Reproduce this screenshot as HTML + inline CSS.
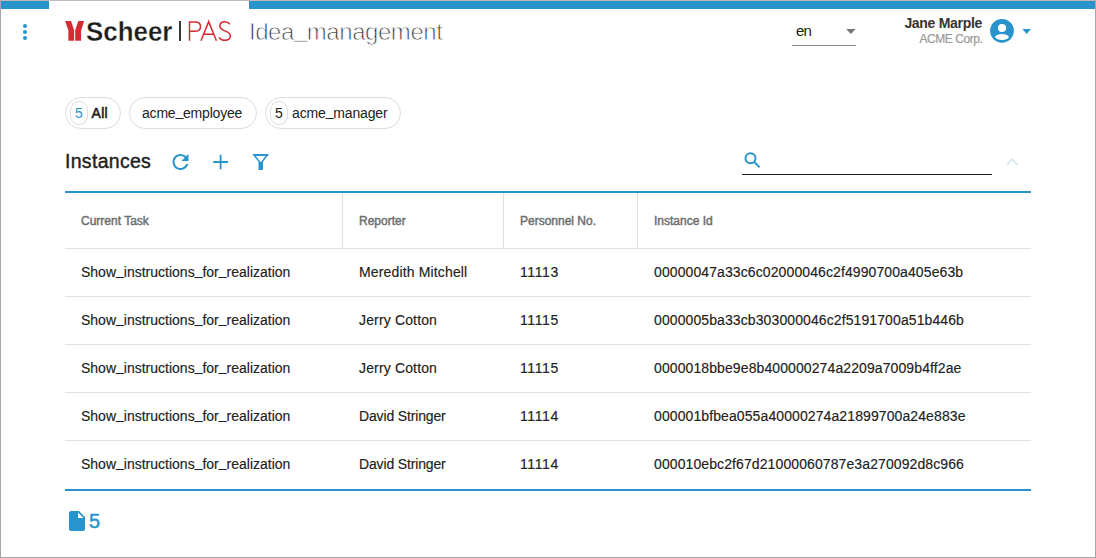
<!DOCTYPE html>
<html><head><meta charset="utf-8">
<style>
*{box-sizing:border-box;margin:0;padding:0}
html,body{width:1096px;height:558px;overflow:hidden;background:#fff}
body{font-family:"Liberation Sans",sans-serif;color:#212121;position:relative}
.a{position:absolute;white-space:nowrap}
.frame{position:absolute;left:0;top:0;width:1096px;height:558px;border:1px solid #aaa6a9;border-top-color:#c4b9b9;pointer-events:none}
.bar{position:absolute;top:1px;height:8px;background:#2994cc}
.dot{position:absolute;left:23px;width:4px;height:4px;border-radius:50%;background:#2994cc}
.chip{position:absolute;top:97px;height:32px;border:1px solid #dcdcdc;border-radius:16px}
.badge{position:absolute;top:3px;height:24px;border:1px solid #dcdcdc;border-radius:12px}
.hline{position:absolute;left:65px;width:966px;height:1px;background:#e0e0e0}
.vline{position:absolute;top:193px;width:1px;height:55px;background:#e0e0e0}
.th{position:absolute;top:214px;font-size:12px;color:#6e6e6e;-webkit-text-stroke:0.45px #6e6e6e}
.td{position:absolute;font-size:14px;color:#212121;-webkit-text-stroke:0.15px #212121}
.us{position:relative;top:-2px}
</style></head><body>
<div class="bar" style="left:1px;width:48px"></div>
<div class="bar" style="left:249px;width:846px"></div>
<div class="dot" style="top:24px"></div>
<div class="dot" style="top:30px"></div>
<div class="dot" style="top:36px"></div>

<!-- logo -->
<div class="a" style="left:86px;top:16px;font-size:28px;font-weight:bold;color:#1d1d1b;transform:scaleX(0.925);transform-origin:0 0;-webkit-text-stroke:0.3px #fff">Scheer</div>
<div class="a" style="left:179px;top:21px;width:2px;height:20px;background:#3a3a3a"></div>

<div class="a" style="left:249px;top:18px;font-size:24px;letter-spacing:-0.45px;color:#3a3a3a;-webkit-text-stroke:0.8px #fff">Idea<span style="position:relative;top:-3px">_</span>management</div>

<!-- lang -->
<div class="a" style="left:796px;top:22px;font-size:15px;letter-spacing:-0.8px;color:#212121">en</div>
<div class="a" style="left:792px;top:45px;width:64px;height:1px;background:#8a8a8a"></div>

<!-- user -->
<div class="a" style="left:880px;top:15px;width:102px;text-align:right;font-size:14px;letter-spacing:-0.3px;font-weight:bold;color:#333">Jane Marple</div>
<div class="a" style="left:880px;top:32px;width:102.4px;text-align:right;font-size:12px;letter-spacing:-0.45px;color:#999;-webkit-text-stroke:0.2px #999">ACME Corp.</div>

<!-- chips -->
<div class="chip" style="left:65px;width:56px"><div class="badge" style="left:4px;width:18px"></div></div>
<div class="chip" style="left:129px;width:128px"></div>
<div class="chip" style="left:265px;width:136px"><div class="badge" style="left:4px;width:18px"></div></div>

<div class="a" style="left:65px;top:150px;font-size:19.5px;letter-spacing:0.3px;color:#212121;-webkit-text-stroke:0.4px #212121">Instances</div>

<div class="a" style="left:65px;top:191px;width:966px;height:2px;background:#2994cc"></div>
<div class="a" style="left:742px;top:174px;width:250px;height:1px;background:#222"></div>

<div class="vline" style="left:342px"></div>
<div class="vline" style="left:503px"></div>
<div class="vline" style="left:637px"></div>
<div class="hline" style="top:248px"></div>
<div class="hline" style="top:296px"></div>
<div class="hline" style="top:344px"></div>
<div class="hline" style="top:392px"></div>
<div class="hline" style="top:440px"></div>
<div class="a" style="left:65px;top:489px;width:966px;height:2px;background:#2994cc"></div>

<div class="th" style="left:81px">Current Task</div>
<div class="th" style="left:359px">Reporter</div>
<div class="th" style="left:520px">Personnel No.</div>
<div class="th" style="left:654px">Instance Id</div>

<div class="td" style="left:81px;top:264px">Show<span class="us">_</span>instructions<span class="us">_</span>for<span class="us">_</span>realization</div>
<div class="td" style="letter-spacing:0.15px;left:359px;top:264px">Meredith Mitchell</div>
<div class="td" style="letter-spacing:0.6px;left:520px;top:264px">11113</div>
<div class="td" style="letter-spacing:0.1px;left:654px;top:264px">00000047a33c6c02000046c2f4990700a405e63b</div>
<div class="td" style="left:81px;top:312px">Show<span class="us">_</span>instructions<span class="us">_</span>for<span class="us">_</span>realization</div>
<div class="td" style="letter-spacing:0.15px;left:359px;top:312px">Jerry Cotton</div>
<div class="td" style="letter-spacing:0.6px;left:520px;top:312px">11115</div>
<div class="td" style="letter-spacing:0.1px;left:654px;top:312px">0000005ba33cb303000046c2f5191700a51b446b</div>
<div class="td" style="left:81px;top:360px">Show<span class="us">_</span>instructions<span class="us">_</span>for<span class="us">_</span>realization</div>
<div class="td" style="letter-spacing:0.15px;left:359px;top:360px">Jerry Cotton</div>
<div class="td" style="letter-spacing:0.6px;left:520px;top:360px">11115</div>
<div class="td" style="letter-spacing:0.1px;left:654px;top:360px">0000018bbe9e8b400000274a2209a7009b4ff2ae</div>
<div class="td" style="left:81px;top:408px">Show<span class="us">_</span>instructions<span class="us">_</span>for<span class="us">_</span>realization</div>
<div class="td" style="letter-spacing:-0.15px;left:359px;top:408px">David Stringer</div>
<div class="td" style="letter-spacing:0.6px;left:520px;top:408px">11114</div>
<div class="td" style="letter-spacing:0.1px;left:654px;top:408px">000001bfbea055a40000274a21899700a24e883e</div>
<div class="td" style="left:81px;top:456px">Show<span class="us">_</span>instructions<span class="us">_</span>for<span class="us">_</span>realization</div>
<div class="td" style="letter-spacing:-0.15px;left:359px;top:456px">David Stringer</div>
<div class="td" style="letter-spacing:0.6px;left:520px;top:456px">11114</div>
<div class="td" style="letter-spacing:0.1px;left:654px;top:456px">000010ebc2f67d21000060787e3a270092d8c966</div>


<!-- icons header -->
<svg class="a" style="left:0;top:0" width="1096" height="558" viewBox="0 0 1096 558">
  <!-- avatar -->
  <circle cx="1002" cy="30.8" r="11.9" fill="#2994cc"/>
  <circle cx="1002" cy="28" r="4.1" fill="#fff"/>
  <ellipse cx="1002" cy="37" rx="6.9" ry="2.9" fill="#fff"/>
  <path d="M1022.4 28.9 H1031 L1026.7 33.9 Z" fill="#2994cc"/>
  <!-- lang triangle -->
  <path d="M846.2 29 H855.6 L850.9 33.9 Z" fill="#757575"/>
  <!-- refresh -->
  <g transform="translate(168.5,150)" fill="#2994cc"><path d="M17.65 6.35C16.2 4.9 14.21 4 12 4c-4.42 0-7.99 3.58-7.99 8s3.57 8 7.99 8c3.73 0 6.84-2.55 7.73-6h-2.08c-.82 2.330-3.040 4-5.650 4-3.310 0-6-2.690-6-6s2.690-6 6-6c1.660 0 3.140.69 4.220 1.780L13 11h7V4l-2.350 2.350z"/></g>
  <!-- plus -->
  <path d="M220.6 154.8 V169.2 M213.2 162 H228" stroke="#2994cc" stroke-width="1.8" fill="none"/>
  <!-- filter -->
  <path fill="#2994cc" fill-rule="evenodd" d="M252.3 154 H269.1 L263 161.8 V170 H258.5 V161.8 Z M255.8 156.1 H265.6 L260.7 162.2 Z"/>
  <!-- search -->
  <circle cx="750.5" cy="158.3" r="5" stroke="#2994cc" stroke-width="2" fill="none"/>
  <path d="M754 161.8 L759.6 167.4" stroke="#2994cc" stroke-width="2" fill="none"/>
  <!-- chevron -->
  <path d="M1007 165 L1012.3 159.2 L1017.6 165" stroke="#cfe6f3" stroke-width="1.6" fill="none"/>
  <!-- file -->
  <g transform="translate(65,509)" fill="#2994cc"><path d="M6 2c-1.1 0-1.99.9-1.99 2L4 20c0 1.1.89 2 1.99 2H18c1.1 0 2-.9 2-2V8l-6-6H6zm7 7V3.5L18.5 9H13z"/></g>
  <!-- logo mark -->
  <path fill="#d42a32" d="M65.1 21.1 H71 L74.1 30.2 V40.8 H68.4 V30.5 Z M78.3 21.1 H84.2 L81.1 30.5 V40.8 H75.2 V30.2 Z"/>
  <path fill="none" stroke="#d42a32" stroke-width="1.5" d="M189.5 40.7 V21.9 H195.2 C198.6 21.9 200.5 23.8 200.5 26.6 C200.5 29.4 198.6 31.3 195.2 31.3 H189.5 M201 40.7 L208.7 21.6 L216.4 40.7 M203.8 34.2 H213.6 M229.8 24.2 C228.6 22.5 226.8 21.8 224.8 21.8 C221.8 21.8 219.9 23.6 219.9 26.1 C219.9 29.2 222.8 30 225 30.9 C227.8 32 230.3 33.2 230.3 36 C230.3 38.6 228 40.3 224.9 40.3 C222.5 40.3 220.3 39.3 219 37.3"/>
</svg>

<!-- chip texts -->
<div class="a" style="left:75px;top:105px;font-size:14px;color:#2994cc">5</div>
<div class="a" style="left:91.5px;top:105px;font-size:14px;letter-spacing:0.3px;color:#212121;-webkit-text-stroke:0.55px #212121">All</div>
<div class="a" style="left:142px;top:105px;font-size:14px;letter-spacing:-0.2px;color:#212121">acme<span class="us">_</span>employee</div>
<div class="a" style="left:275px;top:105px;font-size:14px;color:#212121">5</div>
<div class="a" style="left:292px;top:105px;font-size:14px;letter-spacing:-0.15px;color:#212121">acme<span class="us">_</span>manager</div>

<div class="a" style="left:89px;top:510px;font-size:20px;color:#2994cc;-webkit-text-stroke:0.5px #2994cc">5</div>

<div class="frame"></div>
</body></html>
